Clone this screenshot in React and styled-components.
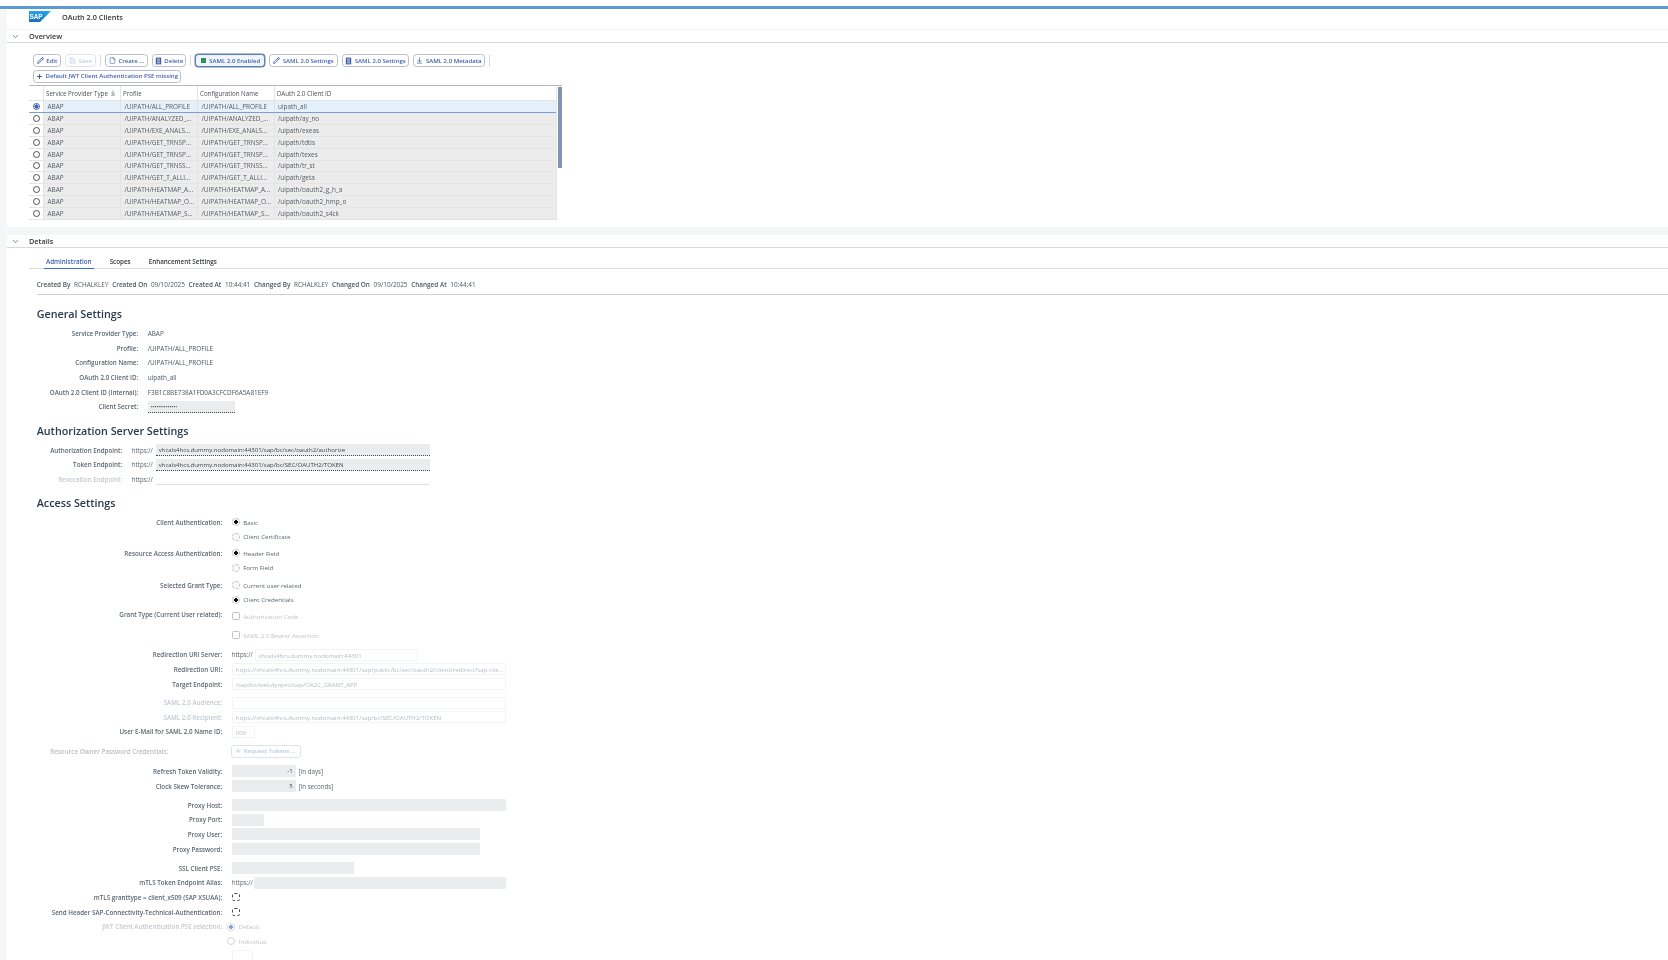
import styled, { createGlobalStyle } from 'styled-components';
import { ArrowDownToLine, ChevronDown, File, Pencil, Plus, Save } from 'lucide-react';

const GlobalStyle = createGlobalStyle`
	html, body {
		margin: 0;
		height: 100%;
		overflow: hidden;
		background: #ffffff;
	}
	body {
		font-family: 'Open Sans', 'Liberation Sans', sans-serif;
		font-size: 6.4px;
		color: #32363a;
	}
`;

const tableRows = [
	['/UIPATH/ALL_PROFILE', '/UIPATH/ALL_PROFILE', 'uipath_all'],
	['/UIPATH/ANALYZED_...', '/UIPATH/ANALYZED_...', '/uipath/ay_no'],
	['/UIPATH/EXE_ANALS...', '/UIPATH/EXE_ANALS...', '/uipath/exeas'],
	['/UIPATH/GET_TRNSP...', '/UIPATH/GET_TRNSP...', '/uipath/tdtis'],
	['/UIPATH/GET_TRNSP...', '/UIPATH/GET_TRNSP...', '/uipath/texes'],
	['/UIPATH/GET_TRNSS...', '/UIPATH/GET_TRNSS...', '/uipath/tr_st'],
	['/UIPATH/GET_T_ALLI...', '/UIPATH/GET_T_ALLI...', '/uipath/geta'],
	['/UIPATH/HEATMAP_A...', '/UIPATH/HEATMAP_A...', '/uipath/oauth2_g_h_a'],
	['/UIPATH/HEATMAP_O...', '/UIPATH/HEATMAP_O...', '/uipath/oauth2_hmp_o'],
	['/UIPATH/HEATMAP_S...', '/UIPATH/HEATMAP_S...', '/uipath/oauth2_s4ck'],
];

const SapLogo = () => (
	<svg width="22" height="11" viewBox="0 0 22 11">
		<defs>
			<linearGradient id="sapBlue" x1="0" y1="0" x2="0" y2="1">
				<stop offset="0" stopColor="#25a5e6" />
				<stop offset="1" stopColor="#1670c0" />
			</linearGradient>
		</defs>
		<polygon points="0,0 22,0 11,11 0,11" fill="url(#sapBlue)" />
		<text x=".4" y="8" fontSize="6.4" fontWeight="700" fill="#ffffff" fontFamily="Liberation Sans, sans-serif">
			SAP
		</text>
	</svg>
);

const DeleteGlyph = () => (
	<svg width="7" height="8" viewBox="0 0 7 8">
		<path d="M.8 .6h5.4v6.8H.8z" fill="#3f5fae" />
		<path d="M2 2.2h3M2 4h3M2 5.8h3" stroke="#ffffff" strokeWidth=".7" />
	</svg>
);

export default function App() {
	return (
		<Page>
			<GlobalStyle />
			<BlueLine />
			<Sheet>
				<AppHeader>
					<LogoBox>
						<SapLogo />
					</LogoBox>
					<AppTitle>OAuth 2.0 Clients</AppTitle>
				</AppHeader>

				<PanelHeader>
					<Chevron>
						<ChevronDown size={9} strokeWidth={2} />
					</Chevron>
					<PanelTitle>Overview</PanelTitle>
				</PanelHeader>
				<OverviewBody>
					<Toolbar>
						<ToolButton $w={28}>
							<Pencil size={7} strokeWidth={3} />
							Edit
						</ToolButton>
						<ToolButton $w={31} $disabled>
							<Save size={7} strokeWidth={2} />
							Save
						</ToolButton>
						<Separator />
						<ToolButton $w={43}>
							<File size={7} strokeWidth={2} />
							Create ...
						</ToolButton>
						<ToolButton $w={34}>
							<DeleteGlyph />
							Delete
						</ToolButton>
						<Separator />
						<ToolButton $w={70} $pressed>
							<GreenSquare />
							SAML 2.0 Enabled
						</ToolButton>
						<ToolButton $w={69}>
							<Pencil size={7} strokeWidth={3} />
							SAML 2.0 Settings
						</ToolButton>
						<ToolButton $w={67}>
							<DeleteGlyph />
							SAML 2.0 Settings
						</ToolButton>
						<ToolButton $w={72}>
							<ArrowDownToLine size={7} strokeWidth={2.4} />
							SAML 2.0 Metadata
						</ToolButton>
						<Separator />
					</Toolbar>
					<Toolbar>
						<ToolButton $w={148}>
							<Plus size={7} strokeWidth={3.5} />
							Default JWT Client Authentication PSE missing
						</ToolButton>
					</Toolbar>
					<TableWrap>
						<Table>
							<TableHead>
								<span />
								<HeadCell>
									Service Provider Type
									<ArrowDownToLine size={6} strokeWidth={2} />
								</HeadCell>
								<HeadCell>Profile</HeadCell>
								<HeadCell>Configuration Name</HeadCell>
								<HeadCell>OAuth 2.0 Client ID</HeadCell>
							</TableHead>
							{tableRows.map(([profile, config, id], index) => (
								<TableRow key={id} $selected={index === 0}>
									<RadioCell>
										<TableRadio $selected={index === 0} />
									</RadioCell>
									<Cell>ABAP</Cell>
									<Cell>{profile}</Cell>
									<Cell>{config}</Cell>
									<Cell>{id}</Cell>
								</TableRow>
							))}
						</Table>
						<ScrollTrack>
							<ScrollThumb />
						</ScrollTrack>
					</TableWrap>
				</OverviewBody>

				<SectionGap />

				<PanelHeader>
					<Chevron>
						<ChevronDown size={9} strokeWidth={2} />
					</Chevron>
					<PanelTitle>Details</PanelTitle>
				</PanelHeader>
				<DetailsBody>
					<Tabs>
						<Tab $active>Administration</Tab>
						<Tab>Scopes</Tab>
						<Tab>Enhancement Settings</Tab>
					</Tabs>
					<AdminContent>
						<MetaLine>
							Created By <b>RCHALKLEY</b> Created On <b>09/10/2025</b> Created At <b>10:44:41</b> Changed By{' '}
							<b>RCHALKLEY</b> Changed On <b>09/10/2025</b> Changed At <b>10:44:41</b>
						</MetaLine>

						<Heading $mt={12}>General Settings</Heading>
						<Form $label={102} $mt={4.2}>
							<Row>
								<Label>Service Provider Type:</Label>
								<Value>ABAP</Value>
							</Row>
							<Row>
								<Label>Profile:</Label>
								<Value>/UIPATH/ALL_PROFILE</Value>
							</Row>
							<Row>
								<Label>Configuration Name:</Label>
								<Value>/UIPATH/ALL_PROFILE</Value>
							</Row>
							<Row>
								<Label>OAuth 2.0 Client ID:</Label>
								<Value>uipath_all</Value>
							</Row>
							<Row>
								<Label>OAuth 2.0 Client ID (Internal):</Label>
								<Value>F3B1C8BE738A1FD0A3CFCDF6A5A81EF9</Value>
							</Row>
							<Row>
								<Label>Client Secret:</Label>
								<Input $w={87} $readOnly $mask>
									••••••••••••••
								</Input>
							</Row>
						</Form>

						<Heading $mt={9.4}>Authorization Server Settings</Heading>
						<Form $label={86} $mt={4.1}>
							<Row>
								<Label>Authorization Endpoint:</Label>
								<Scheme $w={24}>https://</Scheme>
								<Input $w={274} $readOnly>
									vhcals4hcs.dummy.nodomain:44301/sap/bc/sec/oauth2/authorize
								</Input>
							</Row>
							<Row>
								<Label>Token Endpoint:</Label>
								<Scheme $w={24}>https://</Scheme>
								<Input $w={274} $readOnly>
									vhcals4hcs.dummy.nodomain:44301/sap/bc/SEC/OAUTH2/TOKEN
								</Input>
							</Row>
							<Row>
								<Label $faint>Revocation Endpoint:</Label>
								<Scheme $w={24}>https://</Scheme>
								<Input $w={274} $blank />
							</Row>
						</Form>

						<Heading $mt={9.2}>Access Settings</Heading>
						<Form $label={186} $mt={4}>
							<Row>
								<Label>Client Authentication:</Label>
								<Option $checked>Basic</Option>
							</Row>
							<Row>
								<Label />
								<Option>Client Certificate</Option>
							</Row>
							<Row $mt={1.8}>
								<Label>Resource Access Authentication:</Label>
								<Option $checked>Header Field</Option>
							</Row>
							<Row>
								<Label />
								<Option>Form Field</Option>
							</Row>
							<Row $mt={2.6}>
								<Label>Selected Grant Type:</Label>
								<Option>Current user related</Option>
							</Row>
							<Row>
								<Label />
								<Option $checked>Client Credentials</Option>
							</Row>
							<Row>
								<Label>Grant Type (Current User related):</Label>
								<Check>Authorization Code</Check>
							</Row>
							<Row $mt={4.4}>
								<Label />
								<Check>SAML 2.0 Bearer Assertion</Check>
							</Row>
							<Row $mt={6.5}>
								<Label>Redirection URI Server:</Label>
								<Scheme $w={23}>https://</Scheme>
								<Input $w={163} $ghost>
									vhcals4hcs.dummy.nodomain:44301
								</Input>
							</Row>
							<Row>
								<Label>Redirection URI:</Label>
								<Input $w={274} $ghost>
									https://vhcals4hcs.dummy.nodomain:44301/sap/public/bc/sec/oauth2/client/redirect?sap-clie...
								</Input>
							</Row>
							<Row>
								<Label>Target Endpoint:</Label>
								<Input $w={274} $ghost>
									/sap/bc/webdynpro/sap/OA2C_GRANT_APP
								</Input>
							</Row>
							<Row $mt={4}>
								<Label $faint>SAML 2.0 Audience:</Label>
								<Input $w={274} $ghost />
							</Row>
							<Row>
								<Label $faint>SAML 2.0 Recipient:</Label>
								<Input $w={274} $ghost>
									https://vhcals4hcs.dummy.nodomain:44301/sap/bc/SEC/OAUTH2/TOKEN
								</Input>
							</Row>
							<Row>
								<Label>User E-Mail for SAML 2.0 Name ID:</Label>
								<Input $w={23} $ghost>
									000
								</Input>
							</Row>
							<Row $mt={4.7}>
								<WideLabel>Resource Owner Password Credentials:</WideLabel>
								<GhostButton>
									<Plus size={6} strokeWidth={3} />
									Request Tokens ...
								</GhostButton>
							</Row>
							<Row $mt={5.4}>
								<Label>Refresh Token Validity:</Label>
								<Input $w={64} $right>
									-1
								</Input>
								<Unit>[in days]</Unit>
							</Row>
							<Row>
								<Label>Clock Skew Tolerance:</Label>
								<Input $w={64} $right>
									5
								</Input>
								<Unit>[in seconds]</Unit>
							</Row>
							<Row $mt={4.4}>
								<Label>Proxy Host:</Label>
								<Input $w={274} />
							</Row>
							<Row>
								<Label>Proxy Port:</Label>
								<Input $w={32} />
							</Row>
							<Row>
								<Label>Proxy User:</Label>
								<Input $w={248} />
							</Row>
							<Row>
								<Label>Proxy Password:</Label>
								<Input $w={248} />
							</Row>
							<Row $mt={4.4}>
								<Label>SSL Client PSE:</Label>
								<Input $w={122} />
							</Row>
							<Row>
								<Label>mTLS Token Endpoint Alias:</Label>
								<Scheme $w={22.5}>https://</Scheme>
								<Input $w={251.5} />
							</Row>
							<Row>
								<Label>mTLS granttype = client_x509 (SAP XSUAA):</Label>
								<DashedBox />
							</Row>
							<Row>
								<Label>Send Header SAP-Connectivity-Technical-Authentication:</Label>
								<DashedBox />
							</Row>
							<Row>
								<Label $faint>JWT Client Authentication PSE selection:</Label>
								<JwtOption $checked>Default</JwtOption>
							</Row>
							<Row>
								<Label />
								<JwtOption>Individual</JwtOption>
							</Row>
							<Row>
								<Label />
								<Input $w={21} $ghost />
							</Row>
						</Form>
					</AdminContent>
				</DetailsBody>
			</Sheet>
		</Page>
	);
}

const Page = styled.div`
	height: 960px;
	overflow: hidden;
	padding-top: 6px;
	box-sizing: border-box;
	background: #ffffff;
	filter: blur(0.3px);
`;

const BlueLine = styled.div`
	height: 3px;
	background: #5b9bd0;
	box-shadow: 0 1px 0 #d9f3fb;
`;

const Sheet = styled.div`
	margin-left: 7px;
	box-shadow: -7px 0 0 #f5f6f7;
	background: #ffffff;
`;

const AppHeader = styled.header`
	display: flex;
	align-items: center;
	height: 20px;
	padding-left: 22px;
	border-bottom: 1px solid #f3f4f5;
`;

const LogoBox = styled.div`
	display: flex;
	width: 33px;
	margin-top: -5px;
`;

const AppTitle = styled.h1`
	margin: -5px 0 0;
	font-size: 7.3px;
	font-weight: 600;
`;

const PanelHeader = styled.div`
	display: flex;
	align-items: center;
	height: 12px;
	border-bottom: 1px solid #d9d9d9;
`;

const Chevron = styled.span`
	display: flex;
	justify-content: center;
	width: 16px;
	color: #3d5fae;
`;

const PanelTitle = styled.h2`
	margin: -1px 0 0 6px;
	font-size: 7.3px;
	font-weight: 600;
	color: #32363a;
`;

const OverviewBody = styled.section`
	padding: 11px 0 7px 22px;
`;

const Toolbar = styled.div`
	display: flex;
	align-items: center;
	gap: 4px;
	height: 13px;
	padding-left: 4px;
	margin-bottom: 2.5px;
`;

const ToolButton = styled.button`
	display: inline-flex;
	align-items: center;
	justify-content: center;
	gap: 2.5px;
	flex: none;
	width: ${({ $w }) => $w}px;
	height: 13px;
	padding: 0;
	box-sizing: border-box;
	border: 1px solid ${({ $disabled, $pressed }) => ($pressed ? '#5b7fb5' : $disabled ? '#dfe3ea' : '#b9c0c9')};
	border-radius: 3.5px;
	background: ${({ $pressed }) => ($pressed ? '#f0f5fb' : '#ffffff')};
	color: ${({ $disabled }) => ($disabled ? '#c1cadf' : '#3f5fae')};
	font: 600 6px 'Open Sans', 'Liberation Sans', sans-serif;
	white-space: nowrap;
	box-shadow: ${({ $pressed }) => ($pressed ? '0 0 0 .5px #5b7fb5' : 'none')};
`;

const GreenSquare = styled.span`
	width: 5px;
	height: 5px;
	margin: 0 1px;
	background: #2f8f5b;
`;

const Separator = styled.span`
	width: 1px;
	height: 11px;
	background: #d9d9d9;
`;

const TableWrap = styled.div`
	display: flex;
	width: 533px;
	border-top: 1px solid #b8b8b8;
`;

const Table = styled.div`
	width: 528px;
	border-right: 1px solid #e5e5e5;
`;

const tableColumns = 'grid-template-columns: 14px 77px 77px 76.5px 1fr;';

const TableHead = styled.div`
	display: grid;
	${tableColumns}
	height: 15px;
	box-sizing: border-box;
	background: #ffffff;
	border-bottom: 1px solid #e5e5e5;
`;

const HeadCell = styled.div`
	display: flex;
	align-items: center;
	gap: 2px;
	padding-left: 2px;
	border-left: 1px solid #e5e5e5;
	color: #4a4f55;
	font-size: 6.2px;
	font-weight: 500;
	white-space: nowrap;
`;

const TableRow = styled.div`
	display: grid;
	${tableColumns}
	height: 11.92px;
	box-sizing: border-box;
	background: ${({ $selected }) => ($selected ? '#e5f1fa' : '#ececed')};
	border-bottom: ${({ $selected }) => ($selected ? '1.5px solid #7c9ddb' : '1px solid #e4e4e5')};
`;

const Cell = styled.div`
	display: flex;
	align-items: center;
	padding-left: 3.5px;
	border-left: 1px solid #e3e3e4;
	color: #555b62;
	white-space: nowrap;
	overflow: hidden;
`;

const RadioCell = styled.div`
	display: flex;
	align-items: center;
	justify-content: center;
	background: #ffffff;
`;

const TableRadio = styled.span`
	position: relative;
	width: 7px;
	height: 7px;
	box-sizing: border-box;
	border-radius: 50%;
	border: 1px solid ${({ $selected }) => ($selected ? '#3f5fae' : '#4a4f55')};
	background: ${({ $selected }) => ($selected ? 'radial-gradient(circle, #3f5fae 0 1.9px, #ffffff 2.2px)' : '#ffffff')};
`;

const ScrollTrack = styled.div`
	width: 4px;
	margin-left: 1px;
`;

const ScrollThumb = styled.div`
	height: 81px;
	margin-top: 1px;
	background: #8094b4;
`;

const SectionGap = styled.div`
	height: 8px;
	background: #f5f6f7;
`;

const DetailsBody = styled.section`
	padding: 7px 0 0 22px;
`;

const Tabs = styled.nav`
	display: flex;
	gap: 14px;
	height: 13px;
	padding-left: 15px;
	border-bottom: 1px solid #d9d9d9;
`;

const Tab = styled.div`
	height: 14px;
	padding: 0 2px;
	box-sizing: border-box;
	line-height: 13px;
	font-size: 6.3px;
	font-weight: 600;
	color: ${({ $active }) => ($active ? '#3f5fae' : '#32363a')};
	border-bottom: ${({ $active }) => ($active ? '1.5px solid #3f6cc4' : 'none')};
`;

const AdminContent = styled.div`
	padding-left: 7.7px;
`;

const MetaLine = styled.div`
	height: 26px;
	box-sizing: border-box;
	padding-top: 10px;
	line-height: 11px;
	border-bottom: 1.5px solid #cfd2d4;
	color: #4e565e;
	font-size: 6.4px;
	font-weight: 600;
	white-space: nowrap;
	b {
		margin: 0 2px;
		font-weight: 400;
	}
`;

const Heading = styled.h3`
	margin: ${({ $mt }) => $mt}px 0 0;
	height: 15px;
	line-height: 15px;
	font-size: 10.75px;
	font-weight: 600;
	color: #2b3a4a;
`;

const Form = styled.div`
	--label: ${({ $label }) => $label}px;
	margin-top: ${({ $mt }) => $mt}px;
`;

const Row = styled.div`
	display: flex;
	align-items: center;
	height: 14.67px;
	margin-top: ${({ $mt }) => $mt || 0}px;
`;

const Label = styled.label`
	flex: none;
	width: calc(var(--label) - 0.5px);
	margin-right: 9.5px;
	text-align: right;
	white-space: nowrap;
	font-size: 6.25px;
	font-weight: 600;
	color: ${({ $faint }) => ($faint ? '#c3c8cd' : '#5b6570')};
`;

const WideLabel = styled(Label)`
	padding-left: 13.5px;
	box-sizing: border-box;
	text-align: left;
	color: #b8bec4;
`;

const Value = styled.span`
	white-space: nowrap;
	color: #4a5560;
`;

const Input = styled.div`
	flex: none;
	width: ${({ $w }) => $w}px;
	height: 12px;
	box-sizing: border-box;
	padding: 0 3px;
	line-height: 12px;
	font-size: ${({ $mask }) => ($mask ? '5px' : '6.05px')};
	white-space: nowrap;
	overflow: hidden;
	text-align: ${({ $right }) => ($right ? 'right' : 'left')};
	color: ${({ $ghost }) => ($ghost ? '#b5bbc1' : '#3f464d')};
	background: ${({ $ghost, $blank }) => ($ghost || $blank ? '#ffffff' : '#ebeced')};
	border-radius: ${({ $readOnly }) => ($readOnly ? '0' : '1px')};
	border: ${({ $ghost }) => ($ghost ? '1px solid #f3f4f5' : 'none')};
	border-bottom: ${({ $readOnly, $blank, $ghost }) =>
		$readOnly ? '1px dotted #444a51' : $blank ? '1px solid #dfe1e3' : $ghost ? '1px solid #f3f4f5' : 'none'};
`;

const Scheme = styled.span`
	flex: none;
	width: ${({ $w }) => $w}px;
	color: #5b6570;
	font-size: 6.2px;
	white-space: nowrap;
`;

const Unit = styled.span`
	margin-left: 3px;
	color: #5b6570;
	font-size: 6.2px;
	white-space: nowrap;
`;

const OptionRow = styled.div`
	display: flex;
	align-items: center;
	gap: 3.5px;
	white-space: nowrap;
	color: #5b6570;
	font-size: 6.15px;
`;

const RadioDot = styled.span`
	flex: none;
	width: 8px;
	height: 8px;
	box-sizing: border-box;
	border-radius: 50%;
	border: 1px dashed #c4c8cc;
	background: ${({ $checked }) => ($checked ? 'radial-gradient(circle, #111 0 1.7px, #eceef0 2.1px)' : '#f7f7f8')};
`;

const Option = ({ $checked, children }) => (
	<OptionRow>
		<RadioDot $checked={$checked} />
		{children}
	</OptionRow>
);

const CheckOption = styled(OptionRow)`
	margin-top: 3.5px;
	color: #c0c5ca;
`;

const CheckBox = styled.span`
	flex: none;
	width: 8px;
	height: 8px;
	box-sizing: border-box;
	border: 1px solid #c0c4c8;
	border-radius: 1.5px;
	background: #ffffff;
`;

const Check = ({ children }) => (
	<CheckOption>
		<CheckBox />
		{children}
	</CheckOption>
);

const GhostButton = styled.div`
	display: inline-flex;
	align-items: center;
	gap: 2.5px;
	height: 12.5px;
	margin-left: -1px;
	padding: 0 3.5px;
	box-sizing: border-box;
	border: 1px solid #dfe3e8;
	border-radius: 3px;
	color: #bcc8e4;
	font-size: 6px;
	font-weight: 600;
	white-space: nowrap;
`;

const DashedBox = styled.span`
	width: 8px;
	height: 8px;
	box-sizing: border-box;
	border: 1px dashed #4a4f55;
	border-radius: 2.5px;
`;

const JwtRow = styled(OptionRow)`
	margin-left: -4.5px;
	color: #c0c5ca;
`;

const JwtDot = styled.span`
	flex: none;
	width: 8px;
	height: 8px;
	box-sizing: border-box;
	border-radius: 50%;
	border: 1px solid #d3d6d9;
	background: ${({ $checked }) => ($checked ? 'radial-gradient(circle, #8a9ed6 0 1.7px, #ffffff 2.1px)' : '#ffffff')};
`;

const JwtOption = ({ $checked, children }) => (
	<JwtRow>
		<JwtDot $checked={$checked} />
		{children}
	</JwtRow>
);
